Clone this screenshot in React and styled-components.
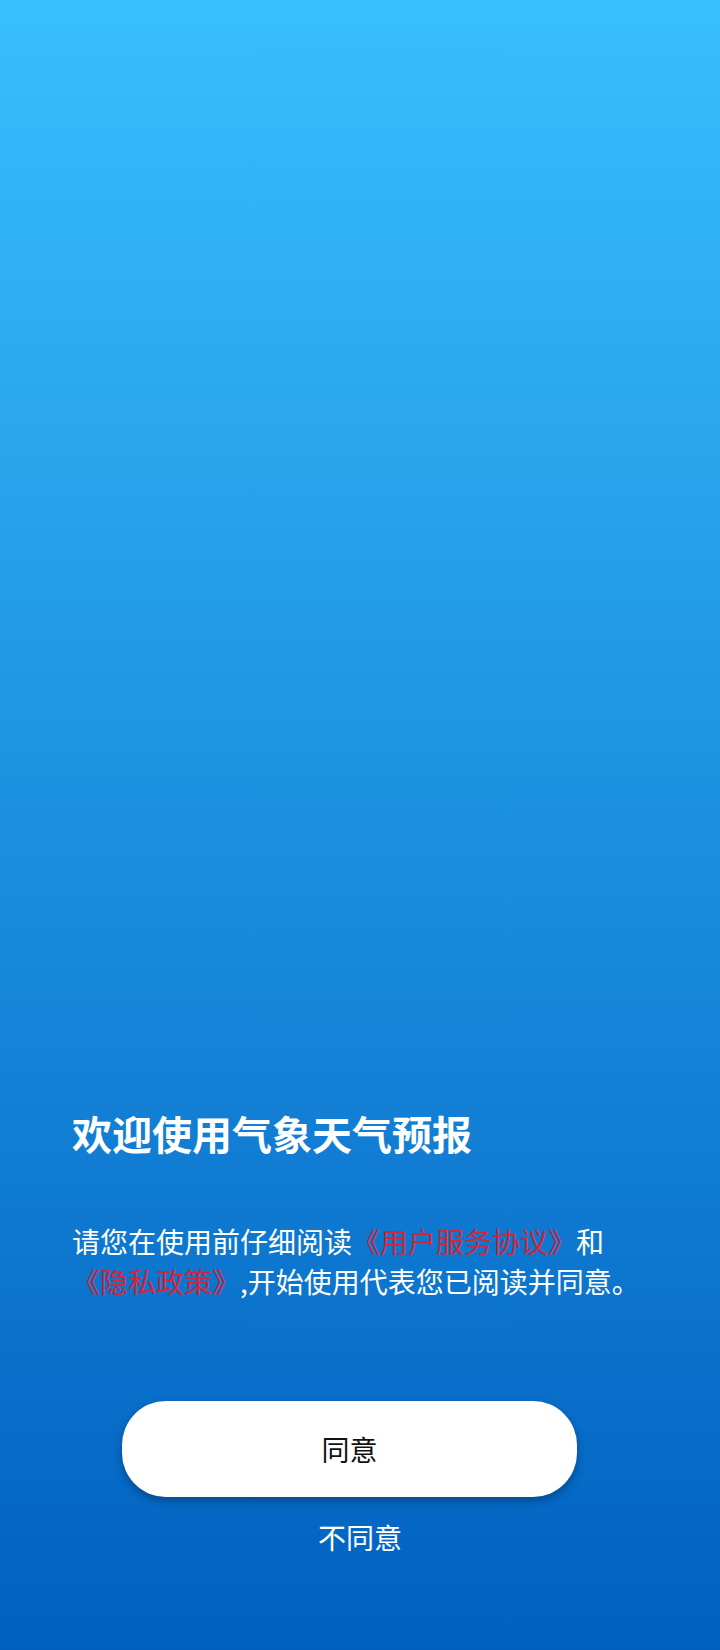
import React from "react";
import styled, { createGlobalStyle } from "styled-components";

const Global = createGlobalStyle`
  html, body { margin: 0; padding: 0; }
  body { font-family: "Noto Sans CJK SC", "Noto Sans", sans-serif; }
`;

const Screen = styled.div`
  width: 720px;
  height: 1650px;
  box-sizing: border-box;
  background: linear-gradient(180deg, #38bfff 0%, #0060c0 100%);
  display: flex;
  flex-direction: column;
  justify-content: flex-end;
  padding: 0 0 93px;
  color: #fff;
`;

const Content = styled.div`
  padding: 0 72px;
`;

const Title = styled.h1`
  margin: 0;
  font-size: 40px;
  line-height: 48px;
  font-weight: 700;
  color: #fff;
`;

const Notice = styled.p`
  margin: 64px 0 0;
  font-size: 28px;
  line-height: 40px;
  font-weight: 400;
  color: #fff;
  line-break: strict;
`;

const Link = styled.span`
  color: #d4263a;
`;

const Actions = styled.div`
  margin-top: 100px;
  display: flex;
  flex-direction: column;
  align-items: center;
  gap: 20px;
`;

const AgreeButton = styled.button`
  width: 455px;
  height: 96px;
  margin-left: -21px;
  border: none;
  border-radius: 44px;
  background: #fff;
  color: #111;
  font-family: inherit;
  font-size: 28px;
  box-shadow: 0 4px 8px rgba(0, 0, 0, 0.3);
  cursor: pointer;
`;

const DeclineButton = styled.button`
  border: none;
  background: none;
  color: #fff;
  font-family: inherit;
  font-size: 28px;
  line-height: 40px;
  padding: 0;
  cursor: pointer;
`;

export default function App() {
  return (
    <>
      <Global />
      <Screen>
        <Content>
          <Title>欢迎使用气象天气预报</Title>
          <Notice>
            请您在使用前仔细阅读<Link>《用户服务协议》</Link>和<Link>《隐私政策》</Link>,开始使用代表您已阅读并同意。
          </Notice>
        </Content>
        <Actions>
          <AgreeButton>同意</AgreeButton>
          <DeclineButton>不同意</DeclineButton>
        </Actions>
      </Screen>
    </>
  );
}
